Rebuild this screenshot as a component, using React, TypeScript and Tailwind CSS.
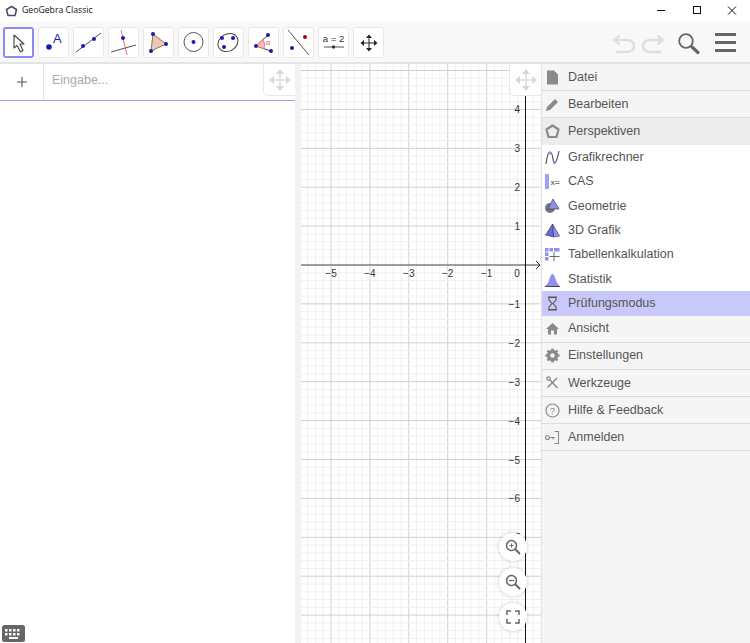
import type { ReactNode } from "react";
import { Plus } from "lucide-react";

const UNIT = 38.9;
const ORIGIN_X = 224.5;
const ORIGIN_Y = 201;

function ToolDot({ x, y, r = 2, fill = "#1a1ab0" }: { x: number; y: number; r?: number; fill?: string }) {
  return <circle cx={x} cy={y} r={r} fill={fill} />;
}

const tools: ReactNode[] = [
  <path key="a" d="M10 7 V20 L13 17.5 L16.5 24 L19 22.5 L16 16 L20 16 Z" fill="#fff" stroke="#444" strokeWidth="1.1" strokeLinejoin="round" />,
  <g key="b">
    <ToolDot x={10} y={19} r={2.8} />
    <text x={14} y={15} fontSize="13" fill="#1a1ab0" fontFamily="Liberation Sans, sans-serif">A</text>
  </g>,
  <g key="c">
    <path d="M2 24 L27 5" stroke="#555" strokeWidth="1" />
    <ToolDot x={9} y={18} />
    <ToolDot x={20} y={11} />
  </g>,
  <g key="d">
    <path d="M12 2 L18 27" stroke="#f07070" strokeWidth="1" />
    <path d="M2 24 L27 17" stroke="#555" strokeWidth="1" />
    <ToolDot x={14} y={10} />
  </g>,
  <g key="e">
    <path d="M9 6 L22 16 L7 23 Z" fill="#e8c8b8" stroke="#9a6a50" strokeWidth="1" />
    <ToolDot x={9} y={6} />
    <ToolDot x={22} y={16} />
    <ToolDot x={7} y={23} />
  </g>,
  <g key="f">
    <circle cx={14.5} cy={14} r={9.5} fill="none" stroke="#555" strokeWidth="1" />
    <ToolDot x={14.5} y={14} />
  </g>,
  <g key="g">
    <ellipse cx={14} cy={14.5} rx={10.5} ry={8.5} transform="rotate(-30 14 14.5)" fill="none" stroke="#444" strokeWidth="1" />
    <ToolDot x={8} y={10} />
    <ToolDot x={19} y={10} />
    <ToolDot x={10} y={19} />
  </g>,
  <g key="h">
    <path d="M7 18 L19 7 M7 18 L22 23" stroke="#444" strokeWidth="1" />
    <path d="M7 18 L14 11.5 Q17 16 15 20.7 Z" fill="#f8b8b8" stroke="#e07070" strokeWidth="0.8" />
    <ToolDot x={19} y={7} />
    <ToolDot x={7} y={18} />
    <ToolDot x={22} y={23} />
    <text x={17} y={17} fontSize="7" fill="#e05050" fontFamily="Liberation Sans, sans-serif">α</text>
  </g>,
  <g key="i">
    <path d="M4 2 L25 27" stroke="#555" strokeWidth="1" />
    <ToolDot x={21} y={9} fill="#b00000" />
    <ToolDot x={8} y={20} />
  </g>,
  <g key="j">
    <text x={14.5} y={14} fontSize="9.5" textAnchor="middle" fill="#333" fontFamily="Liberation Sans, sans-serif">a = 2</text>
    <path d="M5 19 L25 19" stroke="#555" strokeWidth="1" />
    <circle cx={14.5} cy={19} r={1.7} fill="#333" />
  </g>,
  <g key="k">
    <path d="M15 9 L15 21 M9 15 L21 15" stroke="#222" strokeWidth="1" />
    <path d="M15 6.5 L18 10 L12 10 Z M15 23.5 L18 20 L12 20 Z M6.5 15 L10 12 L10 18 Z M23.5 15 L20 12 L20 18 Z" fill="#222" />
  </g>,
];

function MoveHandle() {
  return (
    <svg width="24" height="24" viewBox="0 0 24 24">
      <path d="M12 5 L12 19 M5 12 L19 12" stroke="#dcdcdc" strokeWidth="1.5" />
      <path d="M12 1 L16 6 L8 6 Z M12 23 L16 18 L8 18 Z M1 12 L6 8 L6 16 Z M23 12 L18 8 L18 16 Z" fill="#d8d8d8" />
    </svg>
  );
}

function GraphicsGrid() {
  const xs: number[] = [];
  const ys: number[] = [];
  for (let i = -40; i <= 10; i++) xs.push(i);
  for (let i = -30; i <= 50; i++) ys.push(i);
  const xLabels = [-5, -4, -3, -2, -1];
  const yLabels = [4, 3, 2, 1, -1, -2, -3, -4, -5, -6, -7];

  return (
    <svg className="block" width="240" height="579" viewBox="0 0 240 579">
      {xs.map((i) => {
        const x = ORIGIN_X + (i * UNIT) / 5;
        const major = i % 5 === 0;
        return <line key={`x${i}`} x1={x} x2={x} y1={0} y2={579} stroke={major ? "#d4d4d4" : "#f0f0f0"} strokeWidth="1" />;
      })}
      {ys.map((i) => {
        const y = ORIGIN_Y + (i * UNIT) / 5;
        const major = i % 5 === 0;
        return <line key={`y${i}`} x1={0} x2={240} y1={y} y2={y} stroke={major ? "#d0d0d0" : "#f0f0f0"} strokeWidth="1" />;
      })}
      <line x1={0} x2={238} y1={ORIGIN_Y} y2={ORIGIN_Y} stroke="#555" strokeWidth="1" />
      <line x1={ORIGIN_X} x2={ORIGIN_X} y1={0} y2={579} stroke="#111" strokeWidth="1" />
      <path d="M235 197 L239 201 L235 205" fill="none" stroke="#333" strokeWidth="1" />
      <g fontFamily="Liberation Sans, sans-serif" fontSize="10" fill="#333">
        {xLabels.map((v) => (
          <text key={v} x={ORIGIN_X + v * UNIT} y={213} textAnchor="middle">{`\u2212${-v}`}</text>
        ))}
        <text x={216} y={213} textAnchor="middle">0</text>
        {yLabels.map((v) => (
          <text key={v} x={219} y={ORIGIN_Y - v * UNIT + 4} textAnchor="end">
            {v < 0 ? `\u2212${-v}` : v}
          </text>
        ))}
      </g>
    </svg>
  );
}

function ZoomButton({ children }: { children: ReactNode }) {
  return (
    <div className="flex h-7 w-7 items-center justify-center rounded-full bg-white shadow-[0_0_4px_rgba(0,0,0,0.2)]">
      <svg width="18" height="18" viewBox="0 0 18 18" fill="none" stroke="#666">
        {children}
      </svg>
    </div>
  );
}

const menuIcon = "#8a8a8a";
const accent = "#9090f0";

function MenuRow({ icon, label, className }: { icon: ReactNode; label: string; className: string }) {
  return (
    <div className={`flex items-center pl-[2px] ${className}`}>
      <svg className="mr-[7px] shrink-0" width="17" height="17" viewBox="0 0 17 17">
        {icon}
      </svg>
      <span>{label}</span>
    </div>
  );
}

const topRows = [
  { label: "Datei", icon: <path d="M3 1.5 H10 L14 5.5 V15.5 H3 Z" fill={menuIcon} /> },
  { label: "Bearbeiten", icon: <path d="M2 15 L3 11 L11 3 L14 6 L6 14 Z" fill={menuIcon} /> },
];

const subRows = [
  {
    label: "Grafikrechner",
    icon: (
      <g>
        <path d="M2 15 Q3.5 3 6 3 Q8 3 9 10 Q10 15 11 14 Q13 12 15 2" fill="none" stroke="#555" strokeWidth="1.2" />
        <circle cx="6" cy="4" r="1.5" fill={accent} />
        <circle cx="10.5" cy="13.5" r="1.5" fill={accent} />
      </g>
    ),
  },
  {
    label: "CAS",
    icon: (
      <g>
        <rect x="1" y="1" width="4" height="15" fill="#a0a0f8" />
        <text x="6.5" y="12" fontSize="8" fontWeight="700" fill="#777" fontFamily="Liberation Sans, sans-serif">x=</text>
      </g>
    ),
  },
  {
    label: "Geometrie",
    icon: (
      <g>
        <circle cx="6" cy="11" r="5" fill="#777" />
        <path d="M9 2 L15 12 H4 Z" fill={accent} stroke="#444" strokeWidth="0.7" />
      </g>
    ),
  },
  {
    label: "3D Grafik",
    icon: (
      <g>
        <path d="M8.5 2 L15.5 14 L9.5 15 Z" fill={accent} stroke="#335" strokeWidth="0.6" />
        <path d="M8.5 2 L1.5 13 L9.5 15 Z" fill="#6a6ad8" stroke="#335" strokeWidth="0.6" />
      </g>
    ),
  },
  {
    label: "Tabellenkalkulation",
    icon: (
      <g fill={accent}>
        <rect x="1" y="2" width="3.5" height="3.5" />
        <rect x="5.5" y="2" width="3.5" height="3.5" />
        <rect x="10" y="2" width="5.5" height="3.5" />
        <rect x="1" y="6.5" width="3.5" height="3.5" />
        <rect x="1" y="11" width="3.5" height="3.5" />
        <path d="M10 6 V15 M5.5 10.5 H15.5" stroke="#666" strokeWidth="1" fill="none" />
      </g>
    ),
  },
  {
    label: "Statistik",
    icon: (
      <g>
        <path d="M1.5 15 Q4 13 5.5 8 Q7 3 8.5 3 Q10 3 11.5 8 Q13 13 15.5 15 Z" fill={accent} />
        <path d="M1 15.5 H16" stroke="#444" strokeWidth="1" />
      </g>
    ),
  },
];

const bottomRows = [
  { label: "Ansicht", h: "h-[27px]", icon: <path d="M8.5 3 L15 9 H13 V14.5 H10 V10.5 H7 V14.5 H4 V9 H2 Z" fill={menuIcon} /> },
  {
    label: "Einstellungen",
    h: "h-[27.2px]",
    icon: (
      <g>
        <circle cx="8.5" cy="8.5" r="4" fill="none" stroke={menuIcon} strokeWidth="3.4" />
        <path
          d="M8.5 1.5 V4 M8.5 13 V15.5 M1.5 8.5 H4 M13 8.5 H15.5 M3.5 3.5 L5.3 5.3 M11.7 11.7 L13.5 13.5 M13.5 3.5 L11.7 5.3 M5.3 11.7 L3.5 13.5"
          stroke={menuIcon}
          strokeWidth="2.4"
        />
      </g>
    ),
  },
  {
    label: "Werkzeuge",
    h: "h-[27.2px]",
    icon: (
      <g stroke={menuIcon} fill="none">
        <path d="M6 6 L13.5 14" strokeWidth="1.4" />
        <path d="M13 4 L3.5 13.5" strokeWidth="1.4" />
        <circle cx="4.5" cy="4.5" r="1.7" strokeWidth="1.2" />
      </g>
    ),
  },
  {
    label: "Hilfe & Feedback",
    h: "h-[27.2px]",
    icon: (
      <g>
        <circle cx="8.5" cy="8.5" r="6.5" fill="none" stroke={menuIcon} strokeWidth="1.2" />
        <text x="8.5" y="12" fontSize="9.5" textAnchor="middle" fill={menuIcon} fontFamily="Liberation Sans, sans-serif">?</text>
      </g>
    ),
  },
  {
    label: "Anmelden",
    h: "h-[27.2px]",
    icon: (
      <g fill="none" stroke={menuIcon} strokeWidth="1.1">
        <circle cx="3.5" cy="8.5" r="2" />
        <path d="M5.5 8.5 H11 M9 8.5 V10.5 M10.5 2.5 H14.5 V14.5 H10.5" />
      </g>
    ),
  },
];

export default function App() {
  return (
    <div className="flex h-[643px] w-[750px] flex-col overflow-hidden bg-white font-['Liberation_Sans',sans-serif]">
      {/* title bar */}
      <div className="flex h-[22px] items-center bg-white">
        <svg className="ml-[5px] mr-[4px]" width="13" height="13" viewBox="0 0 13 13">
          <path d="M6.5 1.5 L11.5 4.5 L10 10.5 L3 10.5 L1.5 4.5 Z" fill="#fff" stroke="#4a4a68" strokeWidth="1.5" strokeLinejoin="round" />
        </svg>
        <span className="font-['Open_Sans',sans-serif] text-[8.7px] text-[#111]">GeoGebra Classic</span>
        <svg width="150" height="22" viewBox="0 0 150 22" className="ml-auto">
          <path d="M57 10.5 H65" stroke="#111" strokeWidth="1" />
          <rect x="93.5" y="6.5" width="7" height="7" fill="none" stroke="#111" strokeWidth="1" />
          <path d="M128 6.5 L136 14.5 M136 6.5 L128 14.5" stroke="#111" strokeWidth="1" />
        </svg>
      </div>

      {/* toolbar */}
      <div className="flex h-[42px] items-center border-b-2 border-[#e4e4e4] bg-[#f8f8f8] pl-[3px]">
        <div className="flex gap-1">
          {tools.map((tool, i) => (
            <div
              key={i}
              className={`flex h-[31px] w-[31px] items-center justify-center rounded-[3px] bg-white ${
                i === 0 ? "border-2 border-[#8c8cf0]" : "border border-[#e8e8e8]"
              }`}
            >
              <svg className="shrink-0" width="29" height="29" viewBox="0 0 29 29">
                {tool}
              </svg>
            </div>
          ))}
        </div>
        <div className="ml-auto flex items-center gap-[11px] pr-[14px]">
          <svg width="92" height="32" viewBox="0 0 92 32" fill="none">
            <path d="M3 14 H14 Q22 14 22 20 Q22 26 14 26 H4 M7.5 9.5 L2.5 14 L7.5 18.5" stroke="#dedede" strokeWidth="2.5" />
            <path d="M50 14 H39 Q31 14 31 20 Q31 26 39 26 H49 M45.5 9.5 L50.5 14 L45.5 18.5" stroke="#dedede" strokeWidth="2.5" />
            <circle cx="74" cy="15" r="6.8" stroke="#666" strokeWidth="1.8" />
            <path d="M80 21 L86 26.5" stroke="#666" strokeWidth="3.2" strokeLinecap="round" />
          </svg>
          <div className="flex w-[21px] flex-col gap-[5px]">
            <div className="h-[3px] bg-[#666]" />
            <div className="h-[3px] bg-[#666]" />
            <div className="h-[3px] bg-[#666]" />
          </div>
        </div>
      </div>

      <div className="flex min-h-0 flex-1">
        {/* algebra view */}
        <div className="relative w-[295px] bg-white">
          <div className="flex h-[37px] border-b border-[#a0a0f0]">
            <div className="flex w-[44px] items-center justify-center border-r border-[#e4e4e4]">
              <Plus size={16} strokeWidth={1.6} color="#555" />
            </div>
            <div className="flex items-center pb-[3px] pl-2 text-[12.5px] text-[#aaa]">Eingabe...</div>
          </div>
          <div className="absolute right-0 top-0 flex h-[32px] w-[32px] items-center justify-center rounded-bl-[5px] border-b border-l border-[#e8e8e8] bg-white">
            <MoveHandle />
          </div>
          <svg className="absolute bottom-[1px] left-[2px]" width="23" height="17" viewBox="0 0 23 17">
            <rect width="23" height="17" rx="2.5" fill="#666" />
            <g fill="#fff">
              <rect x="3" y="4" width="2.5" height="2.5" />
              <rect x="7" y="4" width="2.5" height="2.5" />
              <rect x="11" y="4" width="2.5" height="2.5" />
              <rect x="15" y="4" width="2.5" height="2.5" />
              <rect x="3" y="8" width="2.5" height="2.5" />
              <rect x="7" y="8" width="2.5" height="2.5" />
              <rect x="11" y="8" width="2.5" height="2.5" />
              <rect x="15" y="8" width="2.5" height="2.5" />
              <rect x="7" y="12" width="9" height="2" />
            </g>
          </svg>
        </div>

        {/* splitter */}
        <div className="w-[6px] bg-[#f2f2f2]" />

        {/* graphics view */}
        <div className="relative w-[240px] overflow-hidden bg-white">
          <GraphicsGrid />
          <div className="absolute right-0 top-0 flex h-[32px] w-[32px] items-center justify-center rounded-bl-[5px] border-b border-l border-[#e8e8e8] bg-white">
            <MoveHandle />
          </div>
          <div className="absolute left-[198px] top-[469px] flex flex-col gap-[7px]">
            <ZoomButton>
              <circle cx="7.5" cy="7.5" r="5" strokeWidth="1.5" />
              <path d="M11 11 L16 16" strokeWidth="2" />
              <path d="M7.5 5.5 V9.5 M5.5 7.5 H9.5" strokeWidth="1" />
            </ZoomButton>
            <ZoomButton>
              <circle cx="7.5" cy="7.5" r="5" strokeWidth="1.5" />
              <path d="M11 11 L16 16" strokeWidth="2" />
              <path d="M5 7.5 H10" strokeWidth="1.2" />
            </ZoomButton>
            <ZoomButton>
              <path d="M3 7 V3 H7 M11 3 H15 V7 M15 11 V15 H11 M7 15 H3 V11" strokeWidth="1.5" />
            </ZoomButton>
          </div>
        </div>

        {/* menu */}
        <div className="w-[209px] border-l border-[#e4e4e4] bg-[#f5f5f5] text-[12.5px] text-[#555]">
          {topRows.map((row) => (
            <MenuRow key={row.label} icon={row.icon} label={row.label} className="h-[27px] border-b border-[#dcdcdc]" />
          ))}
          <MenuRow
            icon={
              <path
                d="M8.5 2.5 L14.5 6.5 L12.5 14 H4.5 L2.5 6.5 Z"
                fill="none"
                stroke={menuIcon}
                strokeWidth="2.2"
                strokeLinejoin="round"
              />
            }
            label="Perspektiven"
            className="h-[27px] bg-[#ececec]"
          />
          <div className="bg-white">
            {subRows.map((row) => (
              <MenuRow key={row.label} icon={row.icon} label={row.label} className="h-[24.4px]" />
            ))}
            <MenuRow
              icon={
                <path
                  d="M4 2 H13 M4 15 H13 M5 2.5 V5 L8 8.5 L5 12 V14.5 H12 V12 L9 8.5 L12 5 V2.5 Z"
                  fill="#c8c8f8"
                  stroke="#555"
                  strokeWidth="1.1"
                />
              }
              label="Prüfungsmodus"
              className="h-[24.3px] bg-[#c8c8fa]"
            />
          </div>
          {bottomRows.map((row) => (
            <MenuRow key={row.label} icon={row.icon} label={row.label} className={`${row.h} border-b border-[#dcdcdc]`} />
          ))}
        </div>
      </div>
    </div>
  );
}
